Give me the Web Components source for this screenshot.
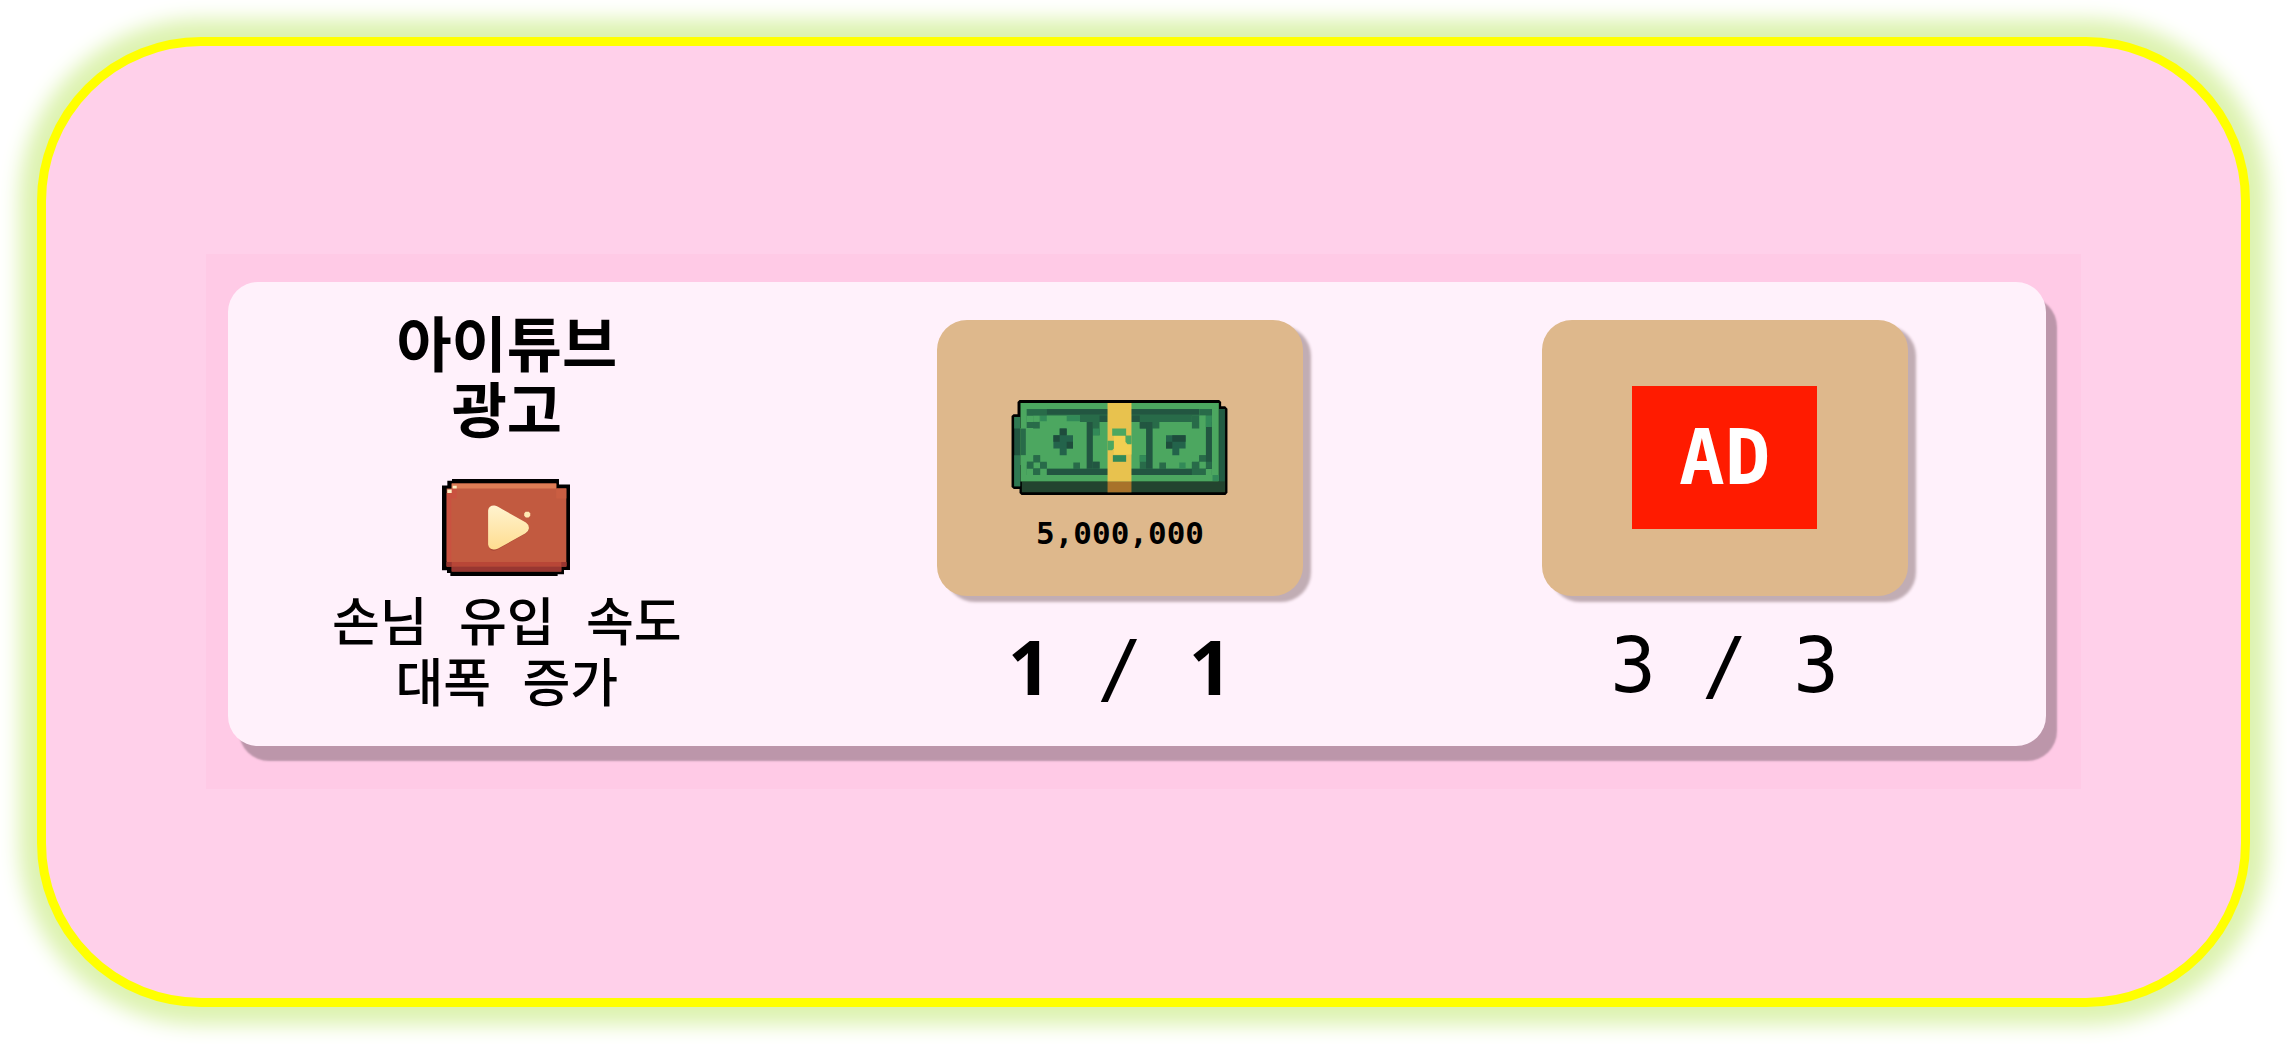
<!DOCTYPE html>
<html lang="ko">
<head>
<meta charset="utf-8">
<meta name="viewport" content="width=device-width, initial-scale=1">
<title>아이튜브 광고</title>
<style>
  body { margin: 0; background: #fff; color: #000; font-family: "DejaVu Sans Mono", "Noto Sans CJK KR", monospace; }
  b { font-family: "Noto Sans", sans-serif; }
</style>
</head>
<body>
<glow-frame>
  <item-panel>
    <item-info>
      <span slot="title">아이튜브<br>광고</span>
      <play-icon slot="icon"></play-icon>
      <span slot="text">손님 유입 속도<br>대폭 증가</span>
    </item-info>
    <item-slot>
      <price-tag>5,000,000</price-tag>
      <span slot="count"><b>1</b> / <b>1</b></span>
    </item-slot>
    <item-slot>
      <ad-badge>AD</ad-badge>
      <span slot="count">3 / 3</span>
    </item-slot>
  </item-panel>
</glow-frame>

<script>
const define = (name, html) => customElements.define(name, class extends HTMLElement {
  constructor() {
    super();
    this.attachShadow({ mode: "open" }).innerHTML = html;
  }
});

define("glow-frame", `
  <style>
    :host { box-sizing: border-box; min-height: 100vh; padding: 37px; display: flex; }
    main {
      flex: 1; box-sizing: border-box; display: flex; flex-direction: column; justify-content: center;
      padding: 0 160px 2px; border: 9px solid #ff0; border-radius: 164px; background: #ffd0ea;
      box-shadow: 0 0 20px 18px #ddf3b0;
    }
  </style>
  <main><slot></slot></main>`);

define("item-panel", `
  <style>
    :host { display: block; background: #ffcae6; padding: 28px 35px 43px 22px; }
    section {
      display: grid; grid-template-columns: 558fr 669fr 541fr; padding-right: 51px;
      border-radius: 30px; background: #fff1fb; box-shadow: 11px 15px 2px #bc96aa;
    }
  </style>
  <section><slot></slot></section>`);

define("item-info", `
  <style>
    :host { display: flex; flex-direction: column; align-items: center; padding: 31px 0; text-align: center; }
    h2 { margin: 0; font-size: 60px; line-height: 66px; font-weight: 700; }
    .icon { display: flex; margin: 34px 0 17px; }
    p { margin: 0; font-size: 52px; line-height: 61px; font-weight: 500; }
  </style>
  <h2><slot name="title"></slot></h2>
  <div class="icon"><slot name="icon"></slot></div>
  <p><slot name="text"></slot></p>`);

define("item-slot", `
  <style>
    :host { display: flex; flex-direction: column; align-items: center; padding-top: 38px; }
    .tile {
      box-sizing: border-box; width: 366px; height: 276px; display: flex; flex-direction: column;
      align-items: center; justify-content: center; border-radius: 30px;
      background: #deb88c; box-shadow: 8px 6px 3px #c1adb4;
    }
    .count { margin-top: 28px; font-size: 76px; line-height: 84px; }
  </style>
  <div class="tile"><slot></slot></div>
  <div class="count"><slot name="count"></slot></div>`);

define("ad-badge", `
  <style>
    :host {
      display: flex; align-items: center; justify-content: center; width: 185px; height: 143px;
      background: #ff1b00; color: #fff; font-size: 76px; line-height: 84px; font-weight: 700;
    }
  </style>
  <slot></slot>`);

define("price-tag", `
  <style>
    :host { display: flex; flex-direction: column; align-items: center; gap: 20px; padding-top: 36px; font-size: 31px; line-height: 36px; font-weight: 700; }
    svg { display: block; width: 217px; height: 95px; }
  </style>
  <svg viewBox="39 44 650 286" aria-hidden="true">
    <path fill="#000" d="M63 44H664L670 50V63H682L689 70V323L683 330H69L63 324V312H46L39 306V92L45 87H57V50Z"/>
    <path fill="#215540" d="M47 95H65V304H47Z"/>
    <path fill="#2f7852" d="M47 95H65V130H47ZM47 210H65V304H47Z"/>
    <path fill="#23442f" d="M70 289H664V71H682V322H70Z"/>
    <path fill="#225c43" d="M664 71H681V289H664Z"/>
    <path fill="#4ca760" d="M66 53H663V289H66Z"/>
    <path fill="#286b49" d="M85 71H642V270H85Z"/>
    <path fill="#225641" d="M145 71H642V88H145ZM145 252H582V270H145ZM265 110H283V250H265ZM444 110H463V250H444ZM624 110H642V250H624Z"/>
    <path fill="#4ca760" d="M85 128H104V110H124V91H245V110H265V250H245V232H225V250H145V232H125V210H105V230H85ZM66 128H85V240H66Z"/>
    <path fill="#286b49" d="M66 130H82V210H66Z"/>
    <path fill="#328a58" d="M205 91H245V108H205ZM125 91H145V108H125Z"/>
    <path fill="#4ca760" d="M104 91H124V108H104ZM85 250H104V270H85ZM105 232H125V250H105ZM125 250H145V270H125ZM85 91H104V110H85Z"/>
    <path fill="#286b49" d="M85 110H104V91H85V71H145V91H124V110H124V130H104V128H85ZM85 230H104V250H85ZM105 210H125V230H105ZM125 230H145V250H125ZM105 250H125V270H105Z"/>
    <path fill="#4ca760" d="M104 91H124V110H104Z"/>
    <path fill="#23634b" d="M184 130H205V150H224V190H205V210H184V190H165V150H184Z"/>
    <path fill="#1e4c3c" d="M184 130H205V150H184ZM165 150H184V170H165ZM205 170H224V190H205Z"/>
    <path fill="#4ca760" d="M304 110H425V130H444V210H425V250H304V230H284V150H304Z"/>
    <path fill="#328a58" d="M284 130H304V150H284ZM425 210H444V230H425Z"/>
    <path fill="#225641" d="M304 91H328V110H304ZM400 91H425V110H444V130H425V110H400ZM284 230H304V250H284Z"/>
    <path fill="#4ca760" d="M484 110H582V91H604V110H624V210H604V230H582V250H504V232H484V250H464V130H484Z"/>
    <path fill="#286b49" d="M582 91H604V71H624V91H604V130H582V110H604V110H582ZM604 210H624V230H642V250H624V270H582V250H604V230H604Z"/>
    <path fill="#4ca760" d="M604 71H624V91H604ZM604 230H624V250H604ZM582 210H600V230H582Z"/>
    <path fill="#286b49" d="M582 230H604V250H582ZM582 91H604V108H582ZM604 71H642V91H604Z"/>
    <path fill="#4ca760" d="M604 91H624V110H604ZM624 252H642V270H624Z"/>
    <path fill="#328a58" d="M624 91H642V125H624ZM544 232H563V250H544ZM644 270H663V288H644Z"/>
    <path fill="#23634b" d="M504 150H563V190H544V210H523V190H504Z"/>
    <path fill="#1e4c3c" d="M523 150H563V170H523ZM504 170H523V190H504Z"/>
    <path fill="#e8c24e" d="M328 53H400V290H328Z"/>
    <path fill="#f2cf51" d="M347 150H382V175H400V208H347Z"/>
    <path fill="#4ca760" d="M342 130H384V151H400V177H388L382 170V152H342ZM328 167H347V190L342 195H328Z"/>
    <path fill="#328a58" d="M344 210H384V230H344Z"/>
    <path fill="#a8722a" d="M328 290H400V322H328Z"/>
  </svg>
  <slot></slot>`);

define("play-icon", `
  <style>
    :host { display: block; }
    svg { display: block; width: 129px; height: 97px; }
  </style>
  <svg viewBox="40 38 386 290" aria-hidden="true">
    <defs>
      <linearGradient id="cream" x1="0" y1="0" x2="0" y2="1">
        <stop offset="0" stop-color="#fff3cf"/><stop offset="1" stop-color="#ffdd90"/>
      </linearGradient>
    </defs>
    <path fill="#000" d="M70 38H390V54H423V310H405V323H386V328H65V319H55V311H40V57H56V43H70Z"/>
    <path fill="#c25a40" d="M54 66H69V51H382V66H412V300H397V315H69V300H54Z"/>
    <path fill="#de7c55" d="M69 51H382V66H69Z"/>
    <path fill="#ca5e42" d="M382 66H412V96H382Z"/>
    <path fill="#c95240" d="M54 80H68V285H54ZM68 66H84V96H68Z"/>
    <path fill="#b84637" d="M54 286H412V300H54Z"/>
    <path fill="#983631" d="M69 300H397V315H69ZM54 286H69V300H54ZM397 286H412V300H397Z"/>
    <path fill="#fff0c4" d="M56 69H69V80H56ZM72 58H84V66H72Z"/>
    <path fill="#a94635" d="M183 247Q190 256 204 250L292 200Q302 193 300 183Z"/>
    <path fill="url(#cream)" d="M178 132Q180 116 197 117Q203 118 209 122L291 168Q301 175 300 186Q299 195 290 200L208 246Q200 250 194 249Q180 247 178 234Z"/>
    <path fill="#ffe9b3" d="M290 136H300L304 141V148L299 153H291L286 148V141Z"/>
  </svg>`);
</script>
</body>
</html>
